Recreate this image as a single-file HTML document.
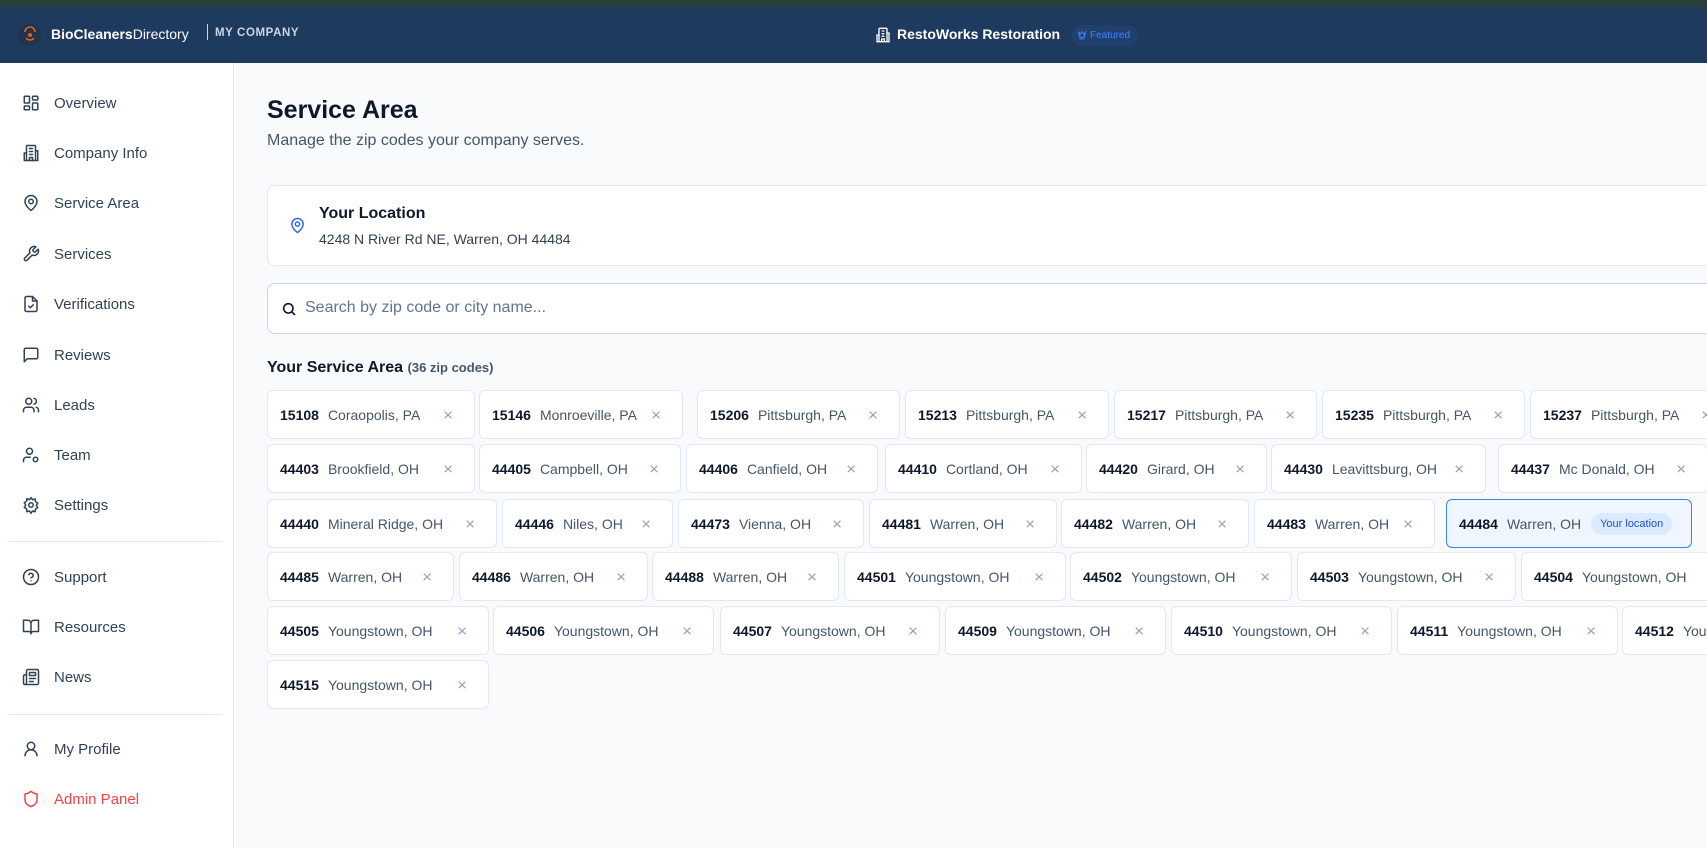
<!DOCTYPE html>
<html><head><meta charset="utf-8"><style>
*{box-sizing:border-box;margin:0;padding:0}
html,body{overflow:hidden}
body{width:1707px;height:848px;background:#f8fafc;font-family:"Liberation Sans",sans-serif;color:#0f172a;position:relative}
.top{position:absolute;left:0;top:0;width:1707px;height:7px;background:#2b3f3a}
.hdr{position:absolute;left:0;top:7px;width:1707px;height:56px;background:#1f3a5f}
.side{position:absolute;left:0;top:63px;width:234px;height:785px;background:#fff;border-right:1px solid #e5e7eb}
.ni{position:absolute;left:22px;display:flex;align-items:center;font-size:15px;color:#334155;height:20px}
.ni svg{width:18px;height:18px;margin-right:14px;fill:none;stroke:#334155;stroke-width:2;stroke-linecap:round;stroke-linejoin:round}
.div{position:absolute;left:7px;width:215px;height:1px;background:#e2e8f0}
.card{position:absolute;left:267px;top:185px;width:1460px;height:81px;background:#fff;border:1px solid #e2e8f0;border-radius:8px}
.search{position:absolute;left:267px;top:283px;width:1460px;height:51px;background:#fff;border:1px solid #cbd5e1;border-radius:8px}
.main{position:absolute;left:0;top:0;width:1707px;height:848px;overflow:hidden}
.row{position:absolute;left:267px;height:49px;width:1440px;overflow:hidden;white-space:nowrap}
.c{position:absolute;top:0;height:49px;background:#fff;border:1px solid #e2e8f0;border-radius:6px;font-size:14px;display:flex;align-items:center;padding-left:12px}
.c b{font-weight:700;color:#0f172a;margin-right:9px}
.c span{color:#475569}
.c i{position:absolute;right:21px;top:50%;transform:translateY(-50%);font-style:normal;color:#94a3b8;font-size:17px;line-height:17px}
</style></head><body>
<div class="top"></div>
<div class="hdr">
<svg style="position:absolute;left:18px;top:16px" width="24" height="24" viewBox="0 0 24 24"><circle cx="12" cy="12" r="11" fill="#23334a"/><path d="M7 9a5 5 0 0 1 10 0M8 15a5 5 0 0 0 8 0" stroke="#e0632c" stroke-width="1.6" fill="none"/><circle cx="12" cy="12" r="2" fill="#e0632c"/></svg>
<div style="position:absolute;left:51px;top:19px;font-size:14px;color:#fff"><b>BioCleaners</b>Directory</div>
<div style="position:absolute;left:207px;top:17px;width:1px;height:16px;background:#cbd5e1"></div>
<div style="position:absolute;left:215px;top:20px;font-size:11.5px;font-weight:700;color:#cbd5e1;letter-spacing:.6px">MY COMPANY</div>
<svg style="position:absolute;left:875px;top:20px" width="16" height="16" viewBox="0 0 24 24" fill="none" stroke="#fff" stroke-width="2"><rect x="6" y="2" width="12" height="20" rx="1"/><path d="M6 12H3v10h3M18 9h3v13h-3M10 6h4M10 10h4M10 14h4M10 22v-4h4v4"/></svg>
<div style="position:absolute;left:897px;top:19px;font-size:14px;font-weight:700;color:#fff">RestoWorks Restoration</div>
<div style="position:absolute;left:1072px;top:18px;width:66px;height:22px;border-radius:11px;background:#22406e;color:#3b82f6;font-size:10px;line-height:22px;padding-left:18px">Featured</div>
<svg style="position:absolute;left:1077px;top:23px" width="10" height="11" viewBox="0 0 24 24" fill="none" stroke="#3b82f6" stroke-width="2.5"><path d="M4 4l4 5 4-6 4 6 4-5-2 12H6zM6 20h12"/></svg>
</div>
<div class="side">
<div class="ni" style="top:30px"><svg viewBox="0 0 24 24"><rect x="3" y="3" width="7" height="9" rx="1"/><rect x="14" y="3" width="7" height="5" rx="1"/><rect x="14" y="12" width="7" height="9" rx="1"/><rect x="3" y="16" width="7" height="5" rx="1"/></svg>Overview</div>
<div class="ni" style="top:80px"><svg viewBox="0 0 24 24"><rect x="6" y="2" width="12" height="20" rx="1"/><path d="M6 12H3v10h3M18 9h3v13h-3M10 6h4M10 10h4M10 14h4M10 22v-4h4v4"/></svg>Company Info</div>
<div class="ni" style="top:130px"><svg viewBox="0 0 24 24"><path d="M20 10c0 6-8 12-8 12s-8-6-8-12a8 8 0 0 1 16 0z"/><circle cx="12" cy="10" r="3"/></svg>Service Area</div>
<div class="ni" style="top:181px"><svg viewBox="0 0 24 24"><path d="M14.7 6.3a1 1 0 0 0 0 1.4l1.6 1.6a1 1 0 0 0 1.4 0l3.8-3.8a6 6 0 0 1-7.9 7.9l-6.9 6.9a2.1 2.1 0 0 1-3-3l6.9-6.9a6 6 0 0 1 7.900-7.9z"/></svg>Services</div>
<div class="ni" style="top:231px"><svg viewBox="0 0 24 24"><path d="M14 2H6a2 2 0 0 0-2 2v16a2 2 0 0 0 2 2h12a2 2 0 0 0 2-2V8z"/><path d="M14 2v6h6M9 15l2 2 4-4"/></svg>Verifications</div>
<div class="ni" style="top:282px"><svg viewBox="0 0 24 24"><path d="M21 15a2 2 0 0 1-2 2H7l-4 4V5a2 2 0 0 1 2-2h14a2 2 0 0 1 2 2z"/></svg>Reviews</div>
<div class="ni" style="top:332px"><svg viewBox="0 0 24 24"><path d="M16 21v-2a4 4 0 0 0-4-4H6a4 4 0 0 0-4 4v2"/><circle cx="9" cy="7" r="4"/><path d="M22 21v-2a4 4 0 0 0-3-3.9M16 3.1a4 4 0 0 1 0 7.8"/></svg>Leads</div>
<div class="ni" style="top:382px"><svg viewBox="0 0 24 24"><circle cx="10" cy="7" r="4"/><path d="M2 21v-2a4 4 0 0 1 4-4h5"/><circle cx="18" cy="18" r="3"/></svg>Team</div>
<div class="ni" style="top:432px"><svg viewBox="0 0 24 24"><circle cx="12" cy="12" r="3"/><path d="M12 2l2 3 3.5-1 .5 3.5 3 2-2 3 2 3-3 2-.5 3.5-3.5-1-2 3-2-3-3.5 1L6 17l-3-2 2-3-2-3 3-2 .5-3.5L10 5z"/></svg>Settings</div>
<div class="div" style="top:478px"></div>
<div class="ni" style="top:504px"><svg viewBox="0 0 24 24"><circle cx="12" cy="12" r="10"/><path d="M9.1 9a3 3 0 0 1 5.8 1c0 2-3 3-3 3M12 17h.01"/></svg>Support</div>
<div class="ni" style="top:554px"><svg viewBox="0 0 24 24"><path d="M2 3h6a4 4 0 0 1 4 4v14a3 3 0 0 0-3-3H2zM22 3h-6a4 4 0 0 0-4 4v14a3 3 0 0 1 3-3h7z"/></svg>Resources</div>
<div class="ni" style="top:604px"><svg viewBox="0 0 24 24"><path d="M4 22h16a2 2 0 0 0 2-2V4a2 2 0 0 0-2-2H8a2 2 0 0 0-2 2v16a2 2 0 0 1-4 0v-9c0-1.1.9-2 2-2h2M18 14h-8M15 18h-5M10 6h8v4h-8z"/></svg>News</div>
<div class="div" style="top:651px"></div>
<div class="ni" style="top:676px"><svg viewBox="0 0 24 24"><circle cx="12" cy="8" r="5"/><path d="M20 21a8 8 0 0 0-16 0"/></svg>My Profile</div>
<div class="ni" style="top:726px;color:#ef4444"><svg viewBox="0 0 24 24" style="stroke:#ef4444"><path d="M20 13c0 5-3.5 7.5-7.7 9a1 1 0 0 1-.7 0C7.5 20.5 4 18 4 13V6a1 1 0 0 1 1-1c2 0 4.5-1.2 6.2-2.7a1.2 1.2 0 0 1 1.6 0C14.5 3.8 17 5 19 5a1 1 0 0 1 1 1z"/></svg>Admin Panel</div>
</div>
<div class="main">
<div style="position:absolute;left:267px;top:96px;font-size:25px;font-weight:700">Service Area</div>
<div style="position:absolute;left:267px;top:132px;font-size:16px;color:#475569">Manage the zip codes your company serves.</div>
<div class="card">
<svg style="position:absolute;left:21px;top:30px" width="17" height="19" viewBox="0 0 24 24" fill="none" stroke="#2563eb" stroke-width="2"><path d="M20 10c0 6-8 12-8 12s-8-6-8-12a8 8 0 0 1 16 0z"/><circle cx="12" cy="10" r="3"/></svg>
<div style="position:absolute;left:51px;top:19px;font-size:16px;font-weight:700">Your Location</div>
<div style="position:absolute;left:51px;top:45px;font-size:14px;color:#334155">4248 N River Rd NE, Warren, OH 44484</div>
</div>
<div class="search">
<svg style="position:absolute;left:13px;top:17px" width="16" height="16" viewBox="0 0 24 24" fill="none" stroke="#0f172a" stroke-width="2.4"><circle cx="11" cy="11" r="7"/><path d="M21 21l-4.3-4.3"/></svg>
<div style="position:absolute;left:37px;top:15px;font-size:16px;color:#64748b">Search by zip code or city name...</div>
</div>
<div style="position:absolute;left:267px;top:359px;font-size:16px;font-weight:700">Your Service Area <span style="font-size:13px;color:#475569">(36 zip codes)</span></div>

<div class="row" style="top:390px">
<div class="c" style="left:0;width:208px"><b>15108</b><span>Coraopolis, PA</span><i>×</i></div>
<div class="c" style="left:212px;width:204px"><b>15146</b><span>Monroeville, PA</span><i>×</i></div>
<div class="c" style="left:430px;width:203px"><b>15206</b><span>Pittsburgh, PA</span><i>×</i></div>
<div class="c" style="left:638px;width:204px"><b>15213</b><span>Pittsburgh, PA</span><i>×</i></div>
<div class="c" style="left:847px;width:203px"><b>15217</b><span>Pittsburgh, PA</span><i>×</i></div>
<div class="c" style="left:1055px;width:203px"><b>15235</b><span>Pittsburgh, PA</span><i>×</i></div>
<div class="c" style="left:1263px;width:203px"><b>15237</b><span>Pittsburgh, PA</span><i>×</i></div>
</div>
<div class="row" style="top:444px">
<div class="c" style="left:0;width:208px"><b>44403</b><span>Brookfield, OH</span><i>×</i></div>
<div class="c" style="left:212px;width:202px"><b>44405</b><span>Campbell, OH</span><i>×</i></div>
<div class="c" style="left:419px;width:192px"><b>44406</b><span>Canfield, OH</span><i>×</i></div>
<div class="c" style="left:618px;width:197px"><b>44410</b><span>Cortland, OH</span><i>×</i></div>
<div class="c" style="left:819px;width:181px"><b>44420</b><span>Girard, OH</span><i>×</i></div>
<div class="c" style="left:1004px;width:215px"><b>44430</b><span>Leavittsburg, OH</span><i>×</i></div>
<div class="c" style="left:1231px;width:210px"><b>44437</b><span>Mc Donald, OH</span><i>×</i></div>
</div>
<div class="row" style="top:499px">
<div class="c" style="left:0;width:230px"><b>44440</b><span>Mineral Ridge, OH</span><i>×</i></div>
<div class="c" style="left:235px;width:171px"><b>44446</b><span>Niles, OH</span><i>×</i></div>
<div class="c" style="left:411px;width:186px"><b>44473</b><span>Vienna, OH</span><i>×</i></div>
<div class="c" style="left:602px;width:188px"><b>44481</b><span>Warren, OH</span><i>×</i></div>
<div class="c" style="left:794px;width:188px"><b>44482</b><span>Warren, OH</span><i>×</i></div>
<div class="c" style="left:987px;width:181px"><b>44483</b><span>Warren, OH</span><i>×</i></div>
<div class="c" style="left:1179px;width:246px;background:#eff6ff;border-color:#3b82f6"><b>44484</b><span>Warren, OH</span><span style="margin-left:10px;background:#dbeafe;color:#1d4ed8;font-size:11px;padding:5px 9px;border-radius:11px">Your location</span></div>
</div>
<div class="row" style="top:552px">
<div class="c" style="left:0;width:187px"><b>44485</b><span>Warren, OH</span><i>×</i></div>
<div class="c" style="left:192px;width:189px"><b>44486</b><span>Warren, OH</span><i>×</i></div>
<div class="c" style="left:385px;width:187px"><b>44488</b><span>Warren, OH</span><i>×</i></div>
<div class="c" style="left:577px;width:222px"><b>44501</b><span>Youngstown, OH</span><i>×</i></div>
<div class="c" style="left:803px;width:222px"><b>44502</b><span>Youngstown, OH</span><i>×</i></div>
<div class="c" style="left:1030px;width:219px"><b>44503</b><span>Youngstown, OH</span><i>×</i></div>
<div class="c" style="left:1254px;width:222px"><b>44504</b><span>Youngstown, OH</span><i>×</i></div>
</div>
<div class="row" style="top:606px">
<div class="c" style="left:0;width:222px"><b>44505</b><span>Youngstown, OH</span><i>×</i></div>
<div class="c" style="left:226px;width:221px"><b>44506</b><span>Youngstown, OH</span><i>×</i></div>
<div class="c" style="left:453px;width:220px"><b>44507</b><span>Youngstown, OH</span><i>×</i></div>
<div class="c" style="left:678px;width:221px"><b>44509</b><span>Youngstown, OH</span><i>×</i></div>
<div class="c" style="left:904px;width:221px"><b>44510</b><span>Youngstown, OH</span><i>×</i></div>
<div class="c" style="left:1130px;width:221px"><b>44511</b><span>Youngstown, OH</span><i>×</i></div>
<div class="c" style="left:1355px;width:221px"><b>44512</b><span>Youngstown, OH</span><i>×</i></div>
</div>
<div class="row" style="top:660px">
<div class="c" style="left:0;width:222px"><b>44515</b><span>Youngstown, OH</span><i>×</i></div>
</div>
</div>
</body></html>
